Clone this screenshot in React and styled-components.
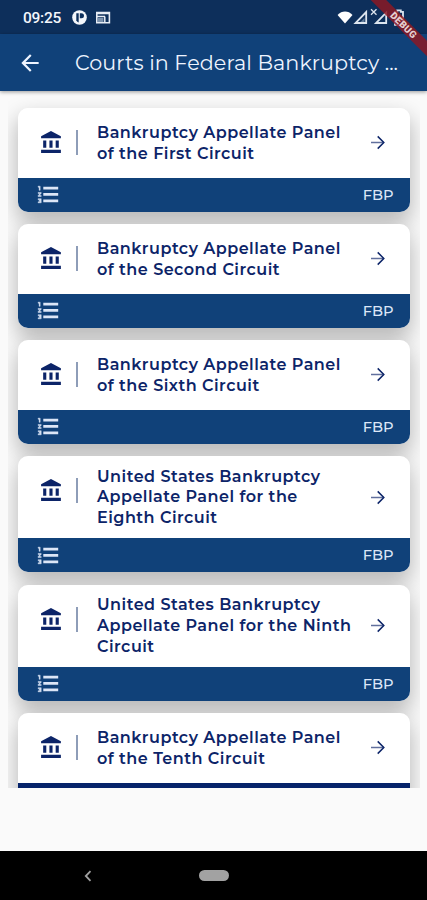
import React from "react";
import styled, { createGlobalStyle } from "styled-components";

const Global = createGlobalStyle`
  * { box-sizing: border-box; }
  body { margin: 0; background: #fafafa; }
`;

const Screen = styled.div`
  position: relative;
  width: 427px;
  height: 900px;
  display: flex;
  flex-direction: column;
  overflow: hidden;
  background: #fafafa;
  font-family: Montserrat, Inter, "Open Sans", sans-serif;
`;

const StatusBar = styled.div`
  height: 34px;
  flex: none;
  display: flex;
  align-items: center;
  justify-content: space-between;
  padding: 1px 20px 0 23px;
  background: #0d2f5b;
  color: #f4f7fb;
`;

const StatusGroup = styled.div`
  display: flex;
  align-items: center;
`;

const Clock = styled.span`
  width: 49px;
  font: 500 15.5px Roboto, sans-serif;
  letter-spacing: -0.25px;
`;

const AppBar = styled.header`
  position: relative;
  z-index: 1;
  height: 57px;
  flex: none;
  display: flex;
  align-items: center;
  padding: 0 20px 0 17px;
  background: #104179;
  color: #eef4ff;
  box-shadow: 0 1px 4px rgba(0, 0, 0, 0.4);
`;

const Title = styled.h1`
  margin: 0 0 0 32px;
  font-size: 20.7px;
  font-weight: 400;
  letter-spacing: 0.08px;
  white-space: nowrap;
`;

const ListLayer = styled.div`
  position: relative;
  z-index: 0;
`;

const List = styled.main`
  height: 697px;
  margin: 0 7px 0 8px;
  padding: 17px 10px 0;
  display: flex;
  flex-direction: column;
  gap: 12.5px;
  overflow: hidden;
`;

const Card = styled.article`
  position: relative;
  flex: none;
  border-radius: 10px;
  background: #fff;

  &::before {
    content: "";
    position: absolute;
    z-index: -1;
    inset: 0;
    border-radius: 10px;
    box-shadow: 0 10px 22px 1px rgba(0, 0, 0, 0.27);
  }
`;

const CardBody = styled.div`
  height: ${(p) => (p.$tall ? 82 : 69.5)}px;
  display: grid;
  grid-template-columns: 58px 21px 248px 65px;
  align-items: center;
  color: #0c2468;
`;

const CourtMark = styled.div`
  align-self: start;
  display: flex;
  padding: 22px 0 0 20.5px;
`;

const Rule = styled.div`
  align-self: start;
  width: 1.5px;
  height: 25px;
  margin-top: 22px;
  background: #8e9db8;
`;

const CourtName = styled.h2`
  margin: 0;
  padding-top: 1.5px;
  font-size: 16px;
  font-weight: 600;
  line-height: 20.6px;
  letter-spacing: 0.48px;
`;

const Line = styled.span`
  display: block;
  white-space: nowrap;
`;

const Go = styled.div`
  display: flex;
  justify-content: center;
`;

const CardFooter = styled.div`
  height: 34px;
  display: flex;
  align-items: center;
  justify-content: space-between;
  padding: 0 16.5px 0 18px;
  border-radius: 0 0 10px 10px;
  background: ${(p) => (p.$dark ? "#06236a" : "#104179")};
  color: #dce6f7;
  font-size: 14.6px;
  font-weight: 500;
`;

const NavBar = styled.nav`
  height: 49px;
  flex: none;
  margin-top: auto;
  display: flex;
  align-items: center;
  padding-left: 83px;
  background: #000;
`;

const HomePill = styled.div`
  width: 30px;
  height: 11px;
  margin-left: 106px;
  border-radius: 6px;
  background: #a2a2a2;
`;

const Ribbon = styled.div`
  position: absolute;
  z-index: 2;
  left: 353px;
  top: 19px;
  width: 100px;
  height: 11px;
  padding-left: 2px;
  transform: rotate(45deg);
  background: rgba(139, 25, 36, 0.85);
  color: #e6cfd2;
  font: 900 9.8px/11px Roboto, sans-serif;
  letter-spacing: 0.3px;
  text-align: center;
`;

const BankIcon = () => (
  <svg width="25" height="25" viewBox="0 0 24 24" fill="currentColor">
    <path d="M4 10v7h3v-7H4zm6 0v7h3v-7h-3zM2 22h19v-3H2v3zm14-12v7h3v-7h-3zm-4.5-9L2 6v2h19V6l-9.5-5z" />
  </svg>
);

const NumberedIcon = () => (
  <svg width="25" height="25" viewBox="0 0 24 24" fill="currentColor">
    <path d="M2 17h2v.5H3v1h1v.5H2v1h3v-4H2v1zm1-9h1V4H2v1h1v3zm-1 3h1.8L2 13.1v.9h3v-1H3.2L5 10.9V10H2v1z" stroke="currentColor" strokeWidth="0.4" />
    <path d="M7 4.6v2.7h14.3V4.6zm0 14.8h14.3v-2.7H7zm0-6.1h14.3v-2.7H7z" />
  </svg>
);

const ForwardIcon = () => (
  <svg width="15" height="15" viewBox="0 0 15 15" fill="none" stroke="currentColor" strokeWidth="1.5">
    <path d="M1 7.5h12.4" opacity="0.65" />
    <path d="M7.7 1.4l6.1 6.1-6.1 6.1" />
  </svg>
);

const BackIcon = () => (
  <svg width="26" height="26" viewBox="0 0 24 24" fill="currentColor">
    <path d="M20 11H7.83l5.59-5.59L12 4l-8 8 8 8 1.41-1.41L7.83 13H20v-2z" />
  </svg>
);

const NoticeIcons = () => (
  <svg width="40" height="18" viewBox="0 0 40 18">
    <circle cx="7.5" cy="8.5" r="7.3" fill="#f4f7fb" />
    <path d="M4.3 4.2h2.4v9.3q-1.6-.6-2.4-2z" fill="#0d2f5b" />
    <path d="M7.8 4.2h1.6q2.6 0 2.6 2.5T9.4 9.2H7.8z" fill="#0d2f5b" />
    <path d="M24.8 3.6h12.6v10.2H24.8z" fill="none" stroke="#e6ecf4" strokeWidth="1.6" />
    <path d="M24 4.6h14M24.5 7.6h8.5M32.8 7.6v6" fill="none" stroke="#e6ecf4" strokeWidth="1.5" />
    <path d="M26 9h5.5v4H26z" fill="#7c93ae" />
  </svg>
);

const SystemIcons = () => (
  <svg width="70" height="20" viewBox="0 0 70 20">
    <path d="M.6 7C4.8 2.4 11.3 2.4 15.5 7L8 15.5z" fill="#fff" />
    <path d="M18.5 15H29.2V4z" fill="none" stroke="#dce5ef" strokeWidth="1.8" />
    <path d="M23.5 14l4-4v4z" fill="#5f7a99" />
    <path d="M34 1.2l5.5 5.5M39.5 1.2L34 6.7" stroke="#dce5ef" strokeWidth="1.3" />
    <path d="M39 15h10.2V4.7z" fill="none" stroke="#dce5ef" strokeWidth="1.8" />
    <path d="M58 3.8h2.2V2.3h3.6v1.5H66v13H58z" fill="none" stroke="#dce5ef" strokeWidth="1.8" />
    <path d="M63 6l-3 4.5h2v4l3-5h-2z" fill="#fff" />
  </svg>
);

const NavBackIcon = () => (
  <svg width="10" height="12" viewBox="0 0 10 12" fill="none" stroke="#a0a0a0" strokeWidth="1.8">
    <path d="M7.5 1.2L2.8 6l4.7 4.8" />
  </svg>
);

const courts = [
  ["Bankruptcy Appellate Panel", "of the First Circuit"],
  ["Bankruptcy Appellate Panel", "of the Second Circuit"],
  ["Bankruptcy Appellate Panel", "of the Sixth Circuit"],
  ["United States Bankruptcy", "Appellate Panel for the", "Eighth Circuit"],
  ["United States Bankruptcy", "Appellate Panel for the Ninth", "Circuit"],
  ["Bankruptcy Appellate Panel", "of the Tenth Circuit"],
];

function CourtCard({ lines, last }) {
  return (
    <Card>
      <CardBody $tall={lines.length === 3}>
        <CourtMark><BankIcon /></CourtMark>
        <Rule />
        <CourtName>
          {lines.map((text) => <Line key={text}>{text}</Line>)}
        </CourtName>
        <Go><ForwardIcon /></Go>
      </CardBody>
      <CardFooter $dark={last}>
        {!last && (
          <>
            <NumberedIcon />
            <span>FBP</span>
          </>
        )}
      </CardFooter>
    </Card>
  );
}

export default function App() {
  return (
    <>
      <Global />
      <Screen>
        <StatusBar>
          <StatusGroup>
            <Clock>09:25</Clock>
            <NoticeIcons />
          </StatusGroup>
          <SystemIcons />
        </StatusBar>
        <AppBar>
          <BackIcon />
          <Title>Courts in Federal Bankruptcy ...</Title>
        </AppBar>
        <ListLayer>
          <List>
            {courts.map((lines, i) => (
              <CourtCard key={i} lines={lines} last={i === courts.length - 1} />
            ))}
          </List>
        </ListLayer>
        <NavBar>
          <NavBackIcon />
          <HomePill />
        </NavBar>
        <Ribbon>DEBUG</Ribbon>
      </Screen>
    </>
  );
}
